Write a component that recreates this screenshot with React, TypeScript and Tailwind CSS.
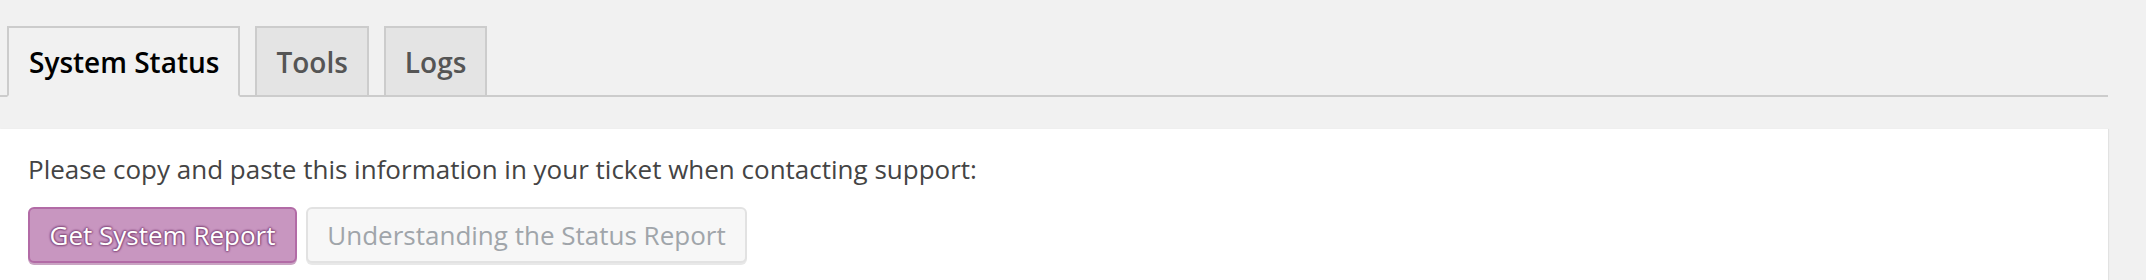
import React from "react";

const tabs = [
  { label: "System Status", active: true },
  { label: "Tools", active: false },
  { label: "Logs", active: false },
];

export default function App() {
  return (
    <div
      className="w-[2146px] h-[280px] overflow-hidden bg-[#f1f1f1] pr-[38px]"
      style={{ fontFamily: '"Open Sans", "Noto Sans", sans-serif' }}
    >
      <nav className="flex gap-[15px] pt-[26px] pl-[7px] border-b-2 border-[#cccccc]">
        {tabs.map((tab) => (
          <div
            key={tab.label}
            className={
              tab.active
                ? "-mb-[2px] h-[71px] flex items-center pl-[20px] pr-[19px] border-2 border-[#cccccc] border-b-[#f1f1f1] bg-[#f1f1f1] text-[28px] font-semibold text-black"
                : "-mb-[2px] h-[71px] flex items-center pl-[19px] pr-[19px] border-2 border-[#cccccc] bg-[#e4e4e4] text-[28px] font-semibold text-[#555555]"
            }
          >
            {tab.label}
          </div>
        ))}
      </nav>

      <div className="mt-[32px] h-[200px] bg-white px-[28px] pt-[19px] shadow-[1px_0_1px_rgba(0,0,0,0.06)]">
        <p className="text-[26px] leading-[42px] text-[#444444]">
          Please copy and paste this information in your ticket when contacting support:
        </p>
        <div className="mt-[17px] flex gap-[9px]">
          <button
            className="h-[56px] w-[269px] flex items-center justify-center rounded-[6px] border-2 border-[#b26ba6] bg-[#c896c0] text-[26px] text-white shadow-[0_2px_0_#c9a3c2]"
            style={{ textShadow: "0 -1px 2px #8a4f80, 1px 0 2px #8a4f80, 0 1px 2px #8a4f80, -1px 0 2px #8a4f80" }}
          >
            Get System Report
          </button>
          <button className="h-[56px] w-[441px] flex items-center justify-center rounded-[6px] border-2 border-[#e2e2e2] bg-[#f7f7f7] text-[26px] text-[#a0a5aa] shadow-[0_2px_0_#e8e8e8]">
            Understanding the Status Report
          </button>
        </div>
      </div>
    </div>
  );
}
